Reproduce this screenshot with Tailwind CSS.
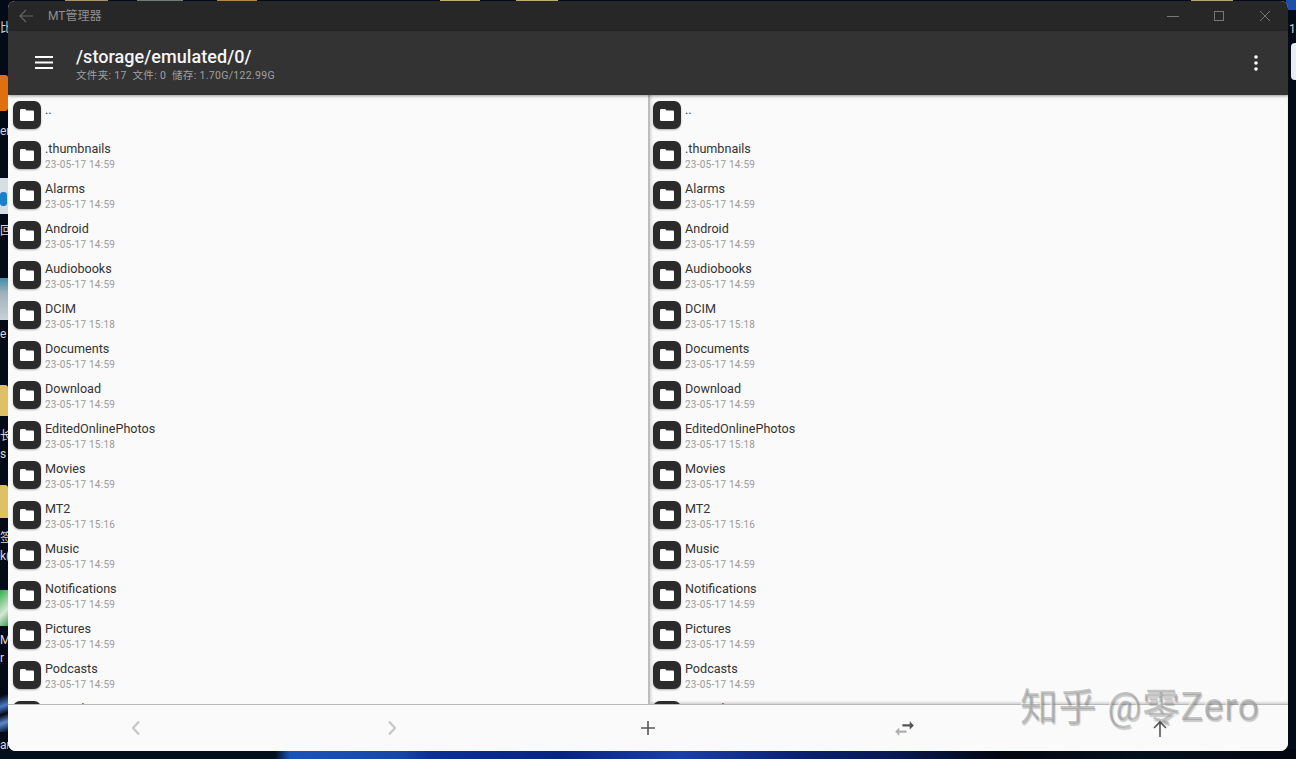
<!doctype html>
<html><head><meta charset="utf-8">
<script src="https://cdn.jsdelivr.net/npm/@tailwindcss/browser@4"></script>
</head>
<body class="relative w-[1296px] h-[759px] overflow-hidden bg-[#040a18] font-['Roboto','Noto_Sans_CJK_SC',sans-serif]">
<svg class="absolute w-0 h-0"><symbol id="f" viewBox="0 0 16 16"><path fill="#fff" d="M1 3.2q0-1.2 1.2-1.2h4l1.3 1.500h6.300q1.200 0 1.200 1.200v8.100q0 1.200-1.200 1.200H2.200q-1.200 0-1.200-1.200z"/></symbol></svg>

<!-- desktop behind the window -->
<div class="absolute left-0 bottom-0 w-[1296px] h-[10px] bg-[linear-gradient(90deg,#03101c_0,#03101c_275px,#1b52b8_290px,#1646a8_400px,#0a2f96_430px,#082480_560px,#1a3fa8_680px,#0a2070_800px,#081850_900px,#02060f_1000px,#04101c_1140px,#02060f_1296px)]"></div>
<div class="absolute left-[65px] top-0 w-[43px] h-[1px] bg-[#a8946a]"></div>
<div class="absolute left-[137px] top-0 w-[46px] h-[1px] bg-[#6f7f78]"></div>
<div class="absolute left-[217px] top-0 w-[40px] h-[1px] bg-[#b08a50]"></div>
<div class="absolute left-[440px] top-0 w-[40px] h-[1px] bg-[#c0ae70]"></div>
<div class="absolute left-[516px] top-0 w-[42px] h-[1px] bg-[#c0ae70]"></div>
<div class="absolute left-[1191px] top-0 w-[42px] h-[1px] bg-[#b5a476]"></div>
<div class="absolute left-[1286px] top-0 w-[10px] h-[10px] bg-[#1c4fa8]"></div>
<div class="absolute left-0 top-[75px] w-2 h-[36px] bg-[#e0700f] rounded-r-[3px]"></div>
<div class="absolute left-0 top-[178px] w-2 h-[36px] bg-[#d8dfe4]"><div class="mt-[14px] w-[7px] h-[14px] rounded-[3px] bg-[#1b7fd0]"></div></div>
<div class="absolute left-0 top-[278px] w-2 h-[42px] bg-[linear-gradient(180deg,#3f8ea8_0,#9fb0bc_35%,#c8d2d8_100%)]"></div>
<div class="absolute left-0 top-[385px] w-2 h-[31px] bg-[#e0c064] rounded-tr-[3px]"></div>
<div class="absolute left-0 top-[485px] w-2 h-[33px] bg-[#e0c064] rounded-tr-[3px]"></div>
<div class="absolute left-0 top-[590px] w-2 h-[36px] bg-[linear-gradient(135deg,#2fae4a_0,#d5e8d5_60%,#40a050_100%)]"></div>
<div class="absolute left-0 top-[692px] w-2 h-[40px] bg-[linear-gradient(160deg,#040a18_10%,#4a78c8_35%,#040a18_55%,#5a88d0_75%,#040a18_100%)]"></div>
<div class="absolute left-0 top-0 w-2 h-[759px] overflow-hidden text-[12px] leading-[14px] text-[#d8d8d8]">
  <span class="absolute left-0 top-[21px]">比</span>
  <span class="absolute left-0 top-[124px]">er</span>
  <span class="absolute left-0 top-[224px]">回</span>
  <span class="absolute left-0 top-[327px]">e</span>
  <span class="absolute left-0 top-[429px]">长</span>
  <span class="absolute left-0 top-[447px]">s</span>
  <span class="absolute left-0 top-[531px]">签</span>
  <span class="absolute left-0 top-[549px]">k(</span>
  <span class="absolute left-0 top-[633px]">M</span>
  <span class="absolute left-0 top-[651px]">r</span>
  <span class="absolute left-0 top-[738px]">ar</span>
</div>
<span class="absolute left-[1289px] top-[22px] text-[12px] leading-[14px] text-[#cfcfcf]">1</span>
<div class="absolute left-[1291px] top-[43px] w-2 h-[37px] rounded-l-[4px] bg-[#e8ecef]"></div>

<!-- window -->
<div class="absolute left-[8px] top-[1px] w-[1280px] h-[750px] rounded-b-[8px] rounded-t-[7px] overflow-hidden flex flex-col bg-[#fafafa]">
  <header class="h-[30px] shrink-0 bg-[#272727] flex items-center">
    <svg class="ml-[10px] w-4 h-4" viewBox="0 0 16 16" fill="none" stroke="#666" stroke-width="1.2"><path d="M15 8H2M8 2L2 8l6 6"/></svg>
    <span class="ml-[14px] text-[12px] text-[#8f8f8f]">MT管理器</span>
    <div class="ml-auto flex items-center gap-[34px] mr-[17px]">
      <svg class="w-3 h-3" viewBox="0 0 12 12" stroke="#777" fill="none"><path d="M0 6.500h12"/></svg>
      <svg class="w-3 h-3" viewBox="0 0 12 12" stroke="#777" fill="none"><rect x="1.500" y="1.500" width="9" height="9"/></svg>
      <svg class="w-3 h-3" viewBox="0 0 12 12" stroke="#777" fill="none"><path d="M1 1l10 10M11 1L1 11"/></svg>
    </div>
  </header>
  <div class="relative z-10 h-[64px] shrink-0 bg-[#333333] flex items-center shadow-[0_1px_3px_rgba(0,0,0,0.4)]">
    <svg class="ml-[27px] w-[18px] h-[14px]" viewBox="0 0 18 14" fill="#fff"><rect y="0" width="18" height="2"/><rect y="5.500" width="18" height="2"/><rect y="11" width="18" height="2"/></svg>
    <div class="ml-[23px] flex flex-col mt-[5px]">
      <div class="text-[18px] leading-[20px] tracking-[0.05px] font-medium text-[#f5f5f5]">/storage/emulated/0/</div>
      <div class="text-[10.5px] leading-[17px] text-[#a0a0a0] whitespace-pre tracking-[0.32px]">文件夹: 17  文件: 0  储存: 1.70G/122.99G</div>
    </div>
    <svg class="ml-auto mr-[30px] w-1 h-4" viewBox="0 0 4 16" fill="#fff"><circle cx="2" cy="2" r="1.800"/><circle cx="2" cy="8" r="1.800"/><circle cx="2" cy="14" r="1.800"/></svg>
  </div>
  <main class="flex-1 flex min-h-0">
    <section class="w-[640px] shrink-0 overflow-hidden pl-[5px]">
      <div class="h-10 flex gap-1"><div class="w-7 h-7 mt-[6px] rounded-[7px] bg-[#2b2b2b] shadow-[0_1px_2px_rgba(0,0,0,0.3)] flex items-center justify-center"><svg class="w-4 h-4"><use href="#f"/></svg></div><div class="text-[12.6px] leading-[16px] mt-[7px] text-[#444]">..</div></div>
      <div class="h-10 flex gap-1"><div class="w-7 h-7 mt-[6px] rounded-[7px] bg-[#2b2b2b] shadow-[0_1px_2px_rgba(0,0,0,0.3)] flex items-center justify-center"><svg class="w-4 h-4"><use href="#f"/></svg></div><div class="mt-[6px]"><div class="text-[12.6px] leading-[16px] text-[#333]">.thumbnails</div><div class="text-[10px] leading-[16px] tracking-[0.25px] text-[#9a9a9a]">23-05-17 14:59</div></div></div>
      <div class="h-10 flex gap-1"><div class="w-7 h-7 mt-[6px] rounded-[7px] bg-[#2b2b2b] shadow-[0_1px_2px_rgba(0,0,0,0.3)] flex items-center justify-center"><svg class="w-4 h-4"><use href="#f"/></svg></div><div class="mt-[6px]"><div class="text-[12.6px] leading-[16px] text-[#333]">Alarms</div><div class="text-[10px] leading-[16px] tracking-[0.25px] text-[#9a9a9a]">23-05-17 14:59</div></div></div>
      <div class="h-10 flex gap-1"><div class="w-7 h-7 mt-[6px] rounded-[7px] bg-[#2b2b2b] shadow-[0_1px_2px_rgba(0,0,0,0.3)] flex items-center justify-center"><svg class="w-4 h-4"><use href="#f"/></svg></div><div class="mt-[6px]"><div class="text-[12.6px] leading-[16px] text-[#333]">Android</div><div class="text-[10px] leading-[16px] tracking-[0.25px] text-[#9a9a9a]">23-05-17 14:59</div></div></div>
      <div class="h-10 flex gap-1"><div class="w-7 h-7 mt-[6px] rounded-[7px] bg-[#2b2b2b] shadow-[0_1px_2px_rgba(0,0,0,0.3)] flex items-center justify-center"><svg class="w-4 h-4"><use href="#f"/></svg></div><div class="mt-[6px]"><div class="text-[12.6px] leading-[16px] text-[#333]">Audiobooks</div><div class="text-[10px] leading-[16px] tracking-[0.25px] text-[#9a9a9a]">23-05-17 14:59</div></div></div>
      <div class="h-10 flex gap-1"><div class="w-7 h-7 mt-[6px] rounded-[7px] bg-[#2b2b2b] shadow-[0_1px_2px_rgba(0,0,0,0.3)] flex items-center justify-center"><svg class="w-4 h-4"><use href="#f"/></svg></div><div class="mt-[6px]"><div class="text-[12.6px] leading-[16px] text-[#333]">DCIM</div><div class="text-[10px] leading-[16px] tracking-[0.25px] text-[#9a9a9a]">23-05-17 15:18</div></div></div>
      <div class="h-10 flex gap-1"><div class="w-7 h-7 mt-[6px] rounded-[7px] bg-[#2b2b2b] shadow-[0_1px_2px_rgba(0,0,0,0.3)] flex items-center justify-center"><svg class="w-4 h-4"><use href="#f"/></svg></div><div class="mt-[6px]"><div class="text-[12.6px] leading-[16px] text-[#333]">Documents</div><div class="text-[10px] leading-[16px] tracking-[0.25px] text-[#9a9a9a]">23-05-17 14:59</div></div></div>
      <div class="h-10 flex gap-1"><div class="w-7 h-7 mt-[6px] rounded-[7px] bg-[#2b2b2b] shadow-[0_1px_2px_rgba(0,0,0,0.3)] flex items-center justify-center"><svg class="w-4 h-4"><use href="#f"/></svg></div><div class="mt-[6px]"><div class="text-[12.6px] leading-[16px] text-[#333]">Download</div><div class="text-[10px] leading-[16px] tracking-[0.25px] text-[#9a9a9a]">23-05-17 14:59</div></div></div>
      <div class="h-10 flex gap-1"><div class="w-7 h-7 mt-[6px] rounded-[7px] bg-[#2b2b2b] shadow-[0_1px_2px_rgba(0,0,0,0.3)] flex items-center justify-center"><svg class="w-4 h-4"><use href="#f"/></svg></div><div class="mt-[6px]"><div class="text-[12.6px] leading-[16px] text-[#333]">EditedOnlinePhotos</div><div class="text-[10px] leading-[16px] tracking-[0.25px] text-[#9a9a9a]">23-05-17 15:18</div></div></div>
      <div class="h-10 flex gap-1"><div class="w-7 h-7 mt-[6px] rounded-[7px] bg-[#2b2b2b] shadow-[0_1px_2px_rgba(0,0,0,0.3)] flex items-center justify-center"><svg class="w-4 h-4"><use href="#f"/></svg></div><div class="mt-[6px]"><div class="text-[12.6px] leading-[16px] text-[#333]">Movies</div><div class="text-[10px] leading-[16px] tracking-[0.25px] text-[#9a9a9a]">23-05-17 14:59</div></div></div>
      <div class="h-10 flex gap-1"><div class="w-7 h-7 mt-[6px] rounded-[7px] bg-[#2b2b2b] shadow-[0_1px_2px_rgba(0,0,0,0.3)] flex items-center justify-center"><svg class="w-4 h-4"><use href="#f"/></svg></div><div class="mt-[6px]"><div class="text-[12.6px] leading-[16px] text-[#333]">MT2</div><div class="text-[10px] leading-[16px] tracking-[0.25px] text-[#9a9a9a]">23-05-17 15:16</div></div></div>
      <div class="h-10 flex gap-1"><div class="w-7 h-7 mt-[6px] rounded-[7px] bg-[#2b2b2b] shadow-[0_1px_2px_rgba(0,0,0,0.3)] flex items-center justify-center"><svg class="w-4 h-4"><use href="#f"/></svg></div><div class="mt-[6px]"><div class="text-[12.6px] leading-[16px] text-[#333]">Music</div><div class="text-[10px] leading-[16px] tracking-[0.25px] text-[#9a9a9a]">23-05-17 14:59</div></div></div>
      <div class="h-10 flex gap-1"><div class="w-7 h-7 mt-[6px] rounded-[7px] bg-[#2b2b2b] shadow-[0_1px_2px_rgba(0,0,0,0.3)] flex items-center justify-center"><svg class="w-4 h-4"><use href="#f"/></svg></div><div class="mt-[6px]"><div class="text-[12.6px] leading-[16px] text-[#333]">Notifications</div><div class="text-[10px] leading-[16px] tracking-[0.25px] text-[#9a9a9a]">23-05-17 14:59</div></div></div>
      <div class="h-10 flex gap-1"><div class="w-7 h-7 mt-[6px] rounded-[7px] bg-[#2b2b2b] shadow-[0_1px_2px_rgba(0,0,0,0.3)] flex items-center justify-center"><svg class="w-4 h-4"><use href="#f"/></svg></div><div class="mt-[6px]"><div class="text-[12.6px] leading-[16px] text-[#333]">Pictures</div><div class="text-[10px] leading-[16px] tracking-[0.25px] text-[#9a9a9a]">23-05-17 14:59</div></div></div>
      <div class="h-10 flex gap-1"><div class="w-7 h-7 mt-[6px] rounded-[7px] bg-[#2b2b2b] shadow-[0_1px_2px_rgba(0,0,0,0.3)] flex items-center justify-center"><svg class="w-4 h-4"><use href="#f"/></svg></div><div class="mt-[6px]"><div class="text-[12.6px] leading-[16px] text-[#333]">Podcasts</div><div class="text-[10px] leading-[16px] tracking-[0.25px] text-[#9a9a9a]">23-05-17 14:59</div></div></div>
      <div class="h-10 flex gap-1"><div class="w-7 h-7 mt-[6px] rounded-[7px] bg-[#2b2b2b] shadow-[0_1px_2px_rgba(0,0,0,0.3)] flex items-center justify-center"><svg class="w-4 h-4"><use href="#f"/></svg></div><div class="mt-[6px]"><div class="text-[12.6px] leading-[16px] text-[#333]">Recordings</div></div></div>
    </section>
    <section class="flex-1 overflow-hidden pl-[3px] border-l-2 border-[#bdbdbd] shadow-[inset_2px_0_2px_rgba(0,0,0,0.08),inset_0_-2px_2px_rgba(0,0,0,0.12)]">
      <div class="h-10 flex gap-1"><div class="w-7 h-7 mt-[6px] rounded-[7px] bg-[#2b2b2b] shadow-[0_1px_2px_rgba(0,0,0,0.3)] flex items-center justify-center"><svg class="w-4 h-4"><use href="#f"/></svg></div><div class="text-[12.6px] leading-[16px] mt-[7px] text-[#444]">..</div></div>
      <div class="h-10 flex gap-1"><div class="w-7 h-7 mt-[6px] rounded-[7px] bg-[#2b2b2b] shadow-[0_1px_2px_rgba(0,0,0,0.3)] flex items-center justify-center"><svg class="w-4 h-4"><use href="#f"/></svg></div><div class="mt-[6px]"><div class="text-[12.6px] leading-[16px] text-[#333]">.thumbnails</div><div class="text-[10px] leading-[16px] tracking-[0.25px] text-[#9a9a9a]">23-05-17 14:59</div></div></div>
      <div class="h-10 flex gap-1"><div class="w-7 h-7 mt-[6px] rounded-[7px] bg-[#2b2b2b] shadow-[0_1px_2px_rgba(0,0,0,0.3)] flex items-center justify-center"><svg class="w-4 h-4"><use href="#f"/></svg></div><div class="mt-[6px]"><div class="text-[12.6px] leading-[16px] text-[#333]">Alarms</div><div class="text-[10px] leading-[16px] tracking-[0.25px] text-[#9a9a9a]">23-05-17 14:59</div></div></div>
      <div class="h-10 flex gap-1"><div class="w-7 h-7 mt-[6px] rounded-[7px] bg-[#2b2b2b] shadow-[0_1px_2px_rgba(0,0,0,0.3)] flex items-center justify-center"><svg class="w-4 h-4"><use href="#f"/></svg></div><div class="mt-[6px]"><div class="text-[12.6px] leading-[16px] text-[#333]">Android</div><div class="text-[10px] leading-[16px] tracking-[0.25px] text-[#9a9a9a]">23-05-17 14:59</div></div></div>
      <div class="h-10 flex gap-1"><div class="w-7 h-7 mt-[6px] rounded-[7px] bg-[#2b2b2b] shadow-[0_1px_2px_rgba(0,0,0,0.3)] flex items-center justify-center"><svg class="w-4 h-4"><use href="#f"/></svg></div><div class="mt-[6px]"><div class="text-[12.6px] leading-[16px] text-[#333]">Audiobooks</div><div class="text-[10px] leading-[16px] tracking-[0.25px] text-[#9a9a9a]">23-05-17 14:59</div></div></div>
      <div class="h-10 flex gap-1"><div class="w-7 h-7 mt-[6px] rounded-[7px] bg-[#2b2b2b] shadow-[0_1px_2px_rgba(0,0,0,0.3)] flex items-center justify-center"><svg class="w-4 h-4"><use href="#f"/></svg></div><div class="mt-[6px]"><div class="text-[12.6px] leading-[16px] text-[#333]">DCIM</div><div class="text-[10px] leading-[16px] tracking-[0.25px] text-[#9a9a9a]">23-05-17 15:18</div></div></div>
      <div class="h-10 flex gap-1"><div class="w-7 h-7 mt-[6px] rounded-[7px] bg-[#2b2b2b] shadow-[0_1px_2px_rgba(0,0,0,0.3)] flex items-center justify-center"><svg class="w-4 h-4"><use href="#f"/></svg></div><div class="mt-[6px]"><div class="text-[12.6px] leading-[16px] text-[#333]">Documents</div><div class="text-[10px] leading-[16px] tracking-[0.25px] text-[#9a9a9a]">23-05-17 14:59</div></div></div>
      <div class="h-10 flex gap-1"><div class="w-7 h-7 mt-[6px] rounded-[7px] bg-[#2b2b2b] shadow-[0_1px_2px_rgba(0,0,0,0.3)] flex items-center justify-center"><svg class="w-4 h-4"><use href="#f"/></svg></div><div class="mt-[6px]"><div class="text-[12.6px] leading-[16px] text-[#333]">Download</div><div class="text-[10px] leading-[16px] tracking-[0.25px] text-[#9a9a9a]">23-05-17 14:59</div></div></div>
      <div class="h-10 flex gap-1"><div class="w-7 h-7 mt-[6px] rounded-[7px] bg-[#2b2b2b] shadow-[0_1px_2px_rgba(0,0,0,0.3)] flex items-center justify-center"><svg class="w-4 h-4"><use href="#f"/></svg></div><div class="mt-[6px]"><div class="text-[12.6px] leading-[16px] text-[#333]">EditedOnlinePhotos</div><div class="text-[10px] leading-[16px] tracking-[0.25px] text-[#9a9a9a]">23-05-17 15:18</div></div></div>
      <div class="h-10 flex gap-1"><div class="w-7 h-7 mt-[6px] rounded-[7px] bg-[#2b2b2b] shadow-[0_1px_2px_rgba(0,0,0,0.3)] flex items-center justify-center"><svg class="w-4 h-4"><use href="#f"/></svg></div><div class="mt-[6px]"><div class="text-[12.6px] leading-[16px] text-[#333]">Movies</div><div class="text-[10px] leading-[16px] tracking-[0.25px] text-[#9a9a9a]">23-05-17 14:59</div></div></div>
      <div class="h-10 flex gap-1"><div class="w-7 h-7 mt-[6px] rounded-[7px] bg-[#2b2b2b] shadow-[0_1px_2px_rgba(0,0,0,0.3)] flex items-center justify-center"><svg class="w-4 h-4"><use href="#f"/></svg></div><div class="mt-[6px]"><div class="text-[12.6px] leading-[16px] text-[#333]">MT2</div><div class="text-[10px] leading-[16px] tracking-[0.25px] text-[#9a9a9a]">23-05-17 15:16</div></div></div>
      <div class="h-10 flex gap-1"><div class="w-7 h-7 mt-[6px] rounded-[7px] bg-[#2b2b2b] shadow-[0_1px_2px_rgba(0,0,0,0.3)] flex items-center justify-center"><svg class="w-4 h-4"><use href="#f"/></svg></div><div class="mt-[6px]"><div class="text-[12.6px] leading-[16px] text-[#333]">Music</div><div class="text-[10px] leading-[16px] tracking-[0.25px] text-[#9a9a9a]">23-05-17 14:59</div></div></div>
      <div class="h-10 flex gap-1"><div class="w-7 h-7 mt-[6px] rounded-[7px] bg-[#2b2b2b] shadow-[0_1px_2px_rgba(0,0,0,0.3)] flex items-center justify-center"><svg class="w-4 h-4"><use href="#f"/></svg></div><div class="mt-[6px]"><div class="text-[12.6px] leading-[16px] text-[#333]">Notifications</div><div class="text-[10px] leading-[16px] tracking-[0.25px] text-[#9a9a9a]">23-05-17 14:59</div></div></div>
      <div class="h-10 flex gap-1"><div class="w-7 h-7 mt-[6px] rounded-[7px] bg-[#2b2b2b] shadow-[0_1px_2px_rgba(0,0,0,0.3)] flex items-center justify-center"><svg class="w-4 h-4"><use href="#f"/></svg></div><div class="mt-[6px]"><div class="text-[12.6px] leading-[16px] text-[#333]">Pictures</div><div class="text-[10px] leading-[16px] tracking-[0.25px] text-[#9a9a9a]">23-05-17 14:59</div></div></div>
      <div class="h-10 flex gap-1"><div class="w-7 h-7 mt-[6px] rounded-[7px] bg-[#2b2b2b] shadow-[0_1px_2px_rgba(0,0,0,0.3)] flex items-center justify-center"><svg class="w-4 h-4"><use href="#f"/></svg></div><div class="mt-[6px]"><div class="text-[12.6px] leading-[16px] text-[#333]">Podcasts</div><div class="text-[10px] leading-[16px] tracking-[0.25px] text-[#9a9a9a]">23-05-17 14:59</div></div></div>
      <div class="h-10 flex gap-1"><div class="w-7 h-7 mt-[6px] rounded-[7px] bg-[#2b2b2b] shadow-[0_1px_2px_rgba(0,0,0,0.3)] flex items-center justify-center"><svg class="w-4 h-4"><use href="#f"/></svg></div><div class="mt-[6px]"><div class="text-[12.6px] leading-[16px] text-[#333]">Recordings</div></div></div>
    </section>
  </main>
  <footer class="relative z-10 h-[47px] shrink-0 grid grid-cols-5 items-center justify-items-center bg-[#fafafa] border-t border-[#b8b8b8]">
    <svg class="w-4 h-4" viewBox="0 0 16 16" fill="none" stroke="#c4c4c4" stroke-width="2"><path d="M11 1.500L5 8l6 6.500"/></svg>
    <svg class="w-4 h-4" viewBox="0 0 16 16" fill="none" stroke="#c4c4c4" stroke-width="2"><path d="M5 1.500L11 8l-6 6.500"/></svg>
    <svg class="w-4 h-4" viewBox="0 0 16 16" fill="none" stroke="#555" stroke-width="1.600"><path d="M8 1v14M1 8h14"/></svg>
    <svg class="w-[25px] h-[25px]" viewBox="0 0 24 24"><path fill="#b0b0b0" d="M6.990 11L3 15l3.990 4v-3H14v-2H6.990v-3z"/><path fill="#555" d="M21 9l-3.990-4v3H10v2h7.010v3L21 9z"/></svg>
    <svg class="w-4 h-[17px] mt-[1px]" viewBox="0 0 16 17" fill="none" stroke="#555" stroke-width="1.600"><path d="M8 17V2M2 8l6-6 6 6"/></svg>
  </footer>
</div>

<!-- watermark -->
<div class="absolute z-20 left-[1020px] top-[684px] whitespace-pre text-[38px] leading-[46px] tracking-[0.6px] text-[#8c8c8c]/50 [text-shadow:1px_2px_1px_rgba(0,0,0,0.2),-1px_-1px_0_rgba(255,255,255,0.6)]">知乎 @零Zero</div>
</body></html>
